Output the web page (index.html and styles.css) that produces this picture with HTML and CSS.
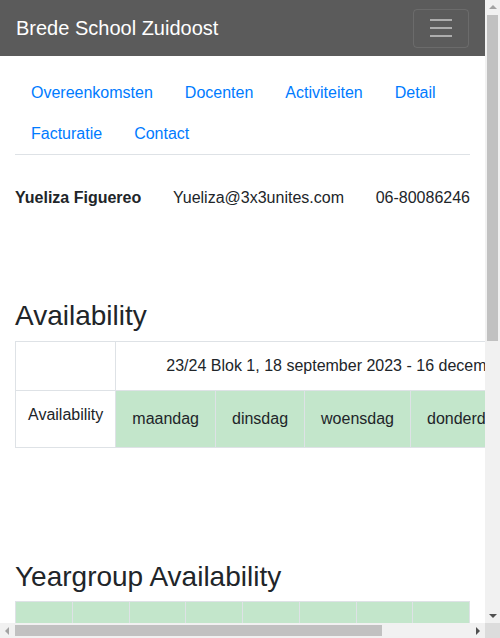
FILE: index.html
```html
<!DOCTYPE html>
<html lang="nl">
<head>
<meta charset="utf-8">
<title>Brede School Zuidoost</title>
<link rel="stylesheet" href="styles.css">
</head>
<body>
<div class="page">
  <nav class="navbar">
    <a class="brand" href="#">Brede School Zuidoost</a>
    <button class="toggler" type="button" aria-label="Toggle navigation">
      <svg width="30" height="30" viewBox="0 0 30 30" aria-hidden="true"><path d="M4 7h22M4 15h22M4 23h22" stroke="rgba(255,255,255,0.5)" stroke-width="2" fill="none"/></svg>
    </button>
  </nav>
  <div class="container">
    <ul class="tabs">
      <li><a href="#">Overeenkomsten</a></li>
      <li><a href="#">Docenten</a></li>
      <li><a href="#">Activiteiten</a></li>
      <li><a href="#">Detail</a></li>
      <li><a href="#">Facturatie</a></li>
      <li><a href="#">Contact</a></li>
    </ul>
    <div class="contact">
      <strong>Yueliza Figuereo</strong>
      <span>Yueliza@3x3unites.com</span>
      <span>06-80086246</span>
    </div>

    <h2 class="heading first">Availability</h2>
    <table class="avail">
      <tr>
        <td class="label"></td>
        <td class="period" colspan="5">23/24 Blok 1, 18 september 2023 - 16 december 2023</td>
      </tr>
      <tr>
        <td class="label">Availability</td>
        <td class="day">maandag</td>
        <td class="day">dinsdag</td>
        <td class="day">woensdag</td>
        <td class="day">donderdag</td>
        <td class="day">vrijdag</td>
      </tr>
    </table>

    <h2 class="heading second">Yeargroup Availability</h2>
    <table class="years">
      <tr><td></td><td></td><td></td><td></td><td></td><td></td><td></td><td></td></tr>
      <tr><td></td><td></td><td></td><td></td><td></td><td></td><td></td><td></td></tr>
    </table>
  </div>
</div>
<div class="vscroll" aria-hidden="true">
  <div class="sbtn"><span class="arrow up"></span></div>
  <div class="vtrack"><div class="vthumb"></div></div>
  <div class="sbtn"><span class="arrow down"></span></div>
</div>
<div class="hscroll" aria-hidden="true">
  <div class="sbtn"><span class="arrow left"></span></div>
  <div class="htrack"><div class="hthumb"></div></div>
  <div class="sbtn"><span class="arrow right"></span></div>
</div>
<div class="corner" aria-hidden="true"></div>
</body>
</html>
```

FILE: styles.css
```css
* { box-sizing: border-box; }
html, body {
  margin: 0;
  padding: 0;
  height: 100%;
  overflow: hidden;
}
body {
  display: grid;
  grid-template-columns: 1fr 15px;
  grid-template-rows: 1fr 15px;
  font-family: "Liberation Sans", Arial, sans-serif;
  font-size: 16px;
  line-height: 1.5;
  color: #212529;
  background: #fff;
}
a { text-decoration: none; }

.page {
  overflow: hidden;
  min-width: 0;
  min-height: 0;
}

/* scrollbars */
.vscroll, .hscroll {
  display: flex;
  background: #f1f1f1;
}
.vscroll { flex-direction: column; }
.sbtn {
  flex: 0 0 15px;
  width: 15px;
  height: 15px;
  display: flex;
  align-items: center;
  justify-content: center;
}
.vtrack { flex: 1; padding: 0 2px; }
.vthumb { height: 326px; background: #c1c1c1; }
.htrack { flex: 1; padding: 2px 0; }
.hthumb { width: 367px; height: 11px; background: #c1c1c1; }
.corner { background: #dcdcdc; }
.arrow { width: 0; height: 0; border-style: solid; }
.arrow.up {
  border-width: 0 4px 4px 4px;
  border-color: transparent transparent #a3a3a3 transparent;
  margin-top: -1px;
}
.arrow.down {
  border-width: 4px 4px 0 4px;
  border-color: #505050 transparent transparent transparent;
  margin-top: 1px;
}
.arrow.left {
  border-width: 4px 4px 4px 0;
  border-color: transparent #a3a3a3 transparent transparent;
  margin-left: -1px;
}
.arrow.right {
  border-width: 4px 0 4px 4px;
  border-color: transparent transparent transparent #505050;
  margin-left: 1px;
}

/* page */
.navbar {
  display: flex;
  align-items: center;
  justify-content: space-between;
  height: 56px;
  padding: 8px 16px;
  background: #5b5b5b;
}
.brand {
  color: #fff;
  font-size: 20px;
  line-height: 30px;
  padding: 5px 0;
}
.toggler {
  display: flex;
  align-items: center;
  justify-content: center;
  width: 56px;
  height: 39px;
  padding: 0;
  margin: 0;
  background: transparent;
  border: 1px solid rgba(255, 255, 255, 0.1);
  border-radius: 4px;
}
.toggler svg { display: block; }

.container {
  padding: 0 15px;
}
.tabs {
  display: flex;
  flex-wrap: wrap;
  list-style: none;
  margin: 16px 0 0;
  padding: 0;
  border-bottom: 1px solid #dee2e6;
}
.tabs a {
  display: block;
  padding: 8px 16px;
  line-height: 25px;
  color: #007bff;
}
.contact {
  display: flex;
  justify-content: space-between;
  margin-top: 31px;
}
.contact strong { font-weight: 700; }

.heading {
  font-size: 28px;
  font-weight: 500;
  line-height: 1.2;
  margin: 0 0 8px;
}
.heading.first { margin-top: 89px; }
.heading.second { margin-top: 112px; }

table {
  border-collapse: collapse;
}
td {
  border: 1px solid #dee2e6;
  padding: 12px;
}
.avail td { white-space: nowrap; }
.avail .label {
  width: 100px;
  vertical-align: top;
}
.avail .period {
  text-align: center;
}
.avail .day {
  padding: 16px;
  background: #c3e6cb;
  vertical-align: middle;
}
.years {
  width: 100%;
  table-layout: fixed;
}
.years td {
  height: 49px;
  background: #c3e6cb;
}
```
